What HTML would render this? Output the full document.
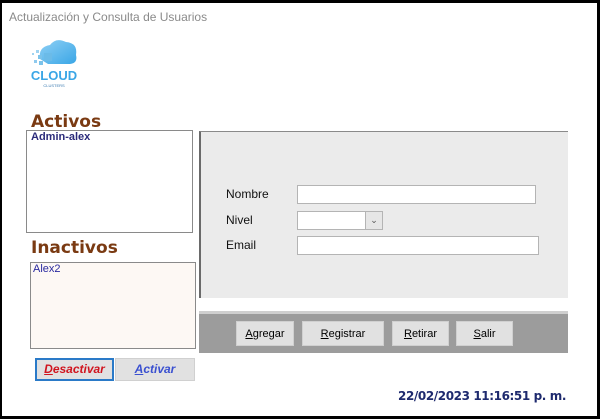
<!DOCTYPE html>
<html><head><meta charset="utf-8"><style>
*{margin:0;padding:0;box-sizing:border-box}
body{width:600px;height:419px;background:#000;position:relative;overflow:hidden;font-family:"Liberation Sans",sans-serif}
.win{position:absolute;left:2px;top:3px;width:595px;height:413px;background:#fff}
.a{position:absolute}
.btn{position:absolute;background:#e1e1e1;border:1px solid #d0d0d0;font-size:11px;text-align:center;color:#000}
.in{position:absolute;background:#fff;border:1px solid #b4b4b4}
.lbl{position:absolute;font-size:12px;color:#111}
</style></head><body>
<div class="win"></div>
<div class="a" style="left:9px;top:10px;font-size:12px;color:#8a8a8a">Actualización y Consulta de Usuarios</div>
<svg class="a" style="left:24px;top:35px" width="60" height="56" viewBox="0 0 60 56">
<defs><linearGradient id="g" x1="0" y1="0" x2="1" y2="1"><stop offset="0" stop-color="#8fd0f5"/><stop offset="1" stop-color="#3aa6e6"/></linearGradient></defs>
<path d="M16 24 Q14 12 26 10 Q32 2 42 7 Q54 8 52 20 Q54 28 46 29 L24 29 Z" fill="url(#g)"/>
<rect x="20" y="18" width="8" height="8" fill="#6bbbe8"/><rect x="14" y="20" width="4" height="4" fill="#7cc3ea"/>
<rect x="10" y="25" width="3" height="3" fill="#8fcaee"/><rect x="15" y="26" width="4" height="4" fill="#7cc3ea"/>
<rect x="8" y="18" width="2" height="2" fill="#9fd3f1"/><rect x="12" y="15" width="3" height="3" fill="#9fd3f1"/>
<text x="30" y="45" text-anchor="middle" font-family="Liberation Sans" font-weight="bold" font-size="13" fill="#3aa6e6">CLOUD</text>
<text x="30" y="52" text-anchor="middle" font-family="Liberation Sans" font-size="4" fill="#3a7ab0">CLUSTERS</text>
</svg>
<div class="a" style="left:31px;top:112px;font-size:17px;font-weight:bold;color:#7a3a12;font-family:'DejaVu Sans',sans-serif">Activos</div>
<div class="a" style="left:26px;top:130px;width:167px;height:103px;border:1px solid #8a8a8a;background:#fff"></div>
<div class="a" style="left:31px;top:131px;font-size:11px;font-weight:bold;color:#2a2a7a">Admin-alex</div>
<div class="a" style="left:31px;top:238px;font-size:17px;font-weight:bold;color:#7a3a12;font-family:'DejaVu Sans',sans-serif">Inactivos</div>
<div class="a" style="left:30px;top:262px;width:166px;height:87px;border:1px solid #8a8a8a;background:#fdf8f4"></div>
<div class="a" style="left:33px;top:263px;font-size:11px;color:#2a2aa0">Alex2</div>
<div class="btn" style="left:35px;top:358px;width:79px;height:23px;border:2px solid #2a7ac8;line-height:19px;color:#d0141e;font-weight:bold;font-style:italic;font-size:12px"><u>D</u>esactivar</div>
<div class="btn" style="left:115px;top:358px;width:80px;height:23px;line-height:21px;color:#3a50d0;font-weight:bold;font-style:italic;font-size:12px"><u>A</u>ctivar</div>
<div class="a" style="left:199px;top:131px;width:369px;height:167px;background:#ebebeb;border-left:2px solid #6a6a6a;border-top:1px solid #8a8a8a"></div>
<div class="lbl" style="left:226px;top:187px">Nombre</div>
<div class="lbl" style="left:226px;top:213px">Nivel</div>
<div class="lbl" style="left:226px;top:238px">Email</div>
<div class="in" style="left:297px;top:185px;width:239px;height:19px"></div>
<div class="in" style="left:297px;top:211px;width:86px;height:19px"><div class="a" style="right:0;top:0;width:17px;height:17px;background:#e6e6e6;border-left:1px solid #b4b4b4;font-size:9px;text-align:center;line-height:17px;color:#555">⌄</div></div>
<div class="in" style="left:297px;top:236px;width:242px;height:19px"></div>
<div class="a" style="left:199px;top:311px;width:369px;height:42px;background:#9c9c9c;border-top:3px solid #cfcfcf"></div>
<div class="btn" style="left:236px;top:321px;width:58px;height:25px;line-height:24px"><u>A</u>gregar</div>
<div class="btn" style="left:302px;top:321px;width:82px;height:25px;line-height:24px"><u>R</u>egistrar</div>
<div class="btn" style="left:392px;top:321px;width:57px;height:25px;line-height:24px"><u>R</u>etirar</div>
<div class="btn" style="left:456px;top:321px;width:57px;height:25px;line-height:24px"><u>S</u>alir</div>
<div class="a" style="left:398px;top:389px;font-size:12px;font-weight:bold;color:#1e2a6e;font-family:'DejaVu Sans',sans-serif;letter-spacing:-0.4px">22/02/2023 11:16:51 p. m.</div>
</body></html>
